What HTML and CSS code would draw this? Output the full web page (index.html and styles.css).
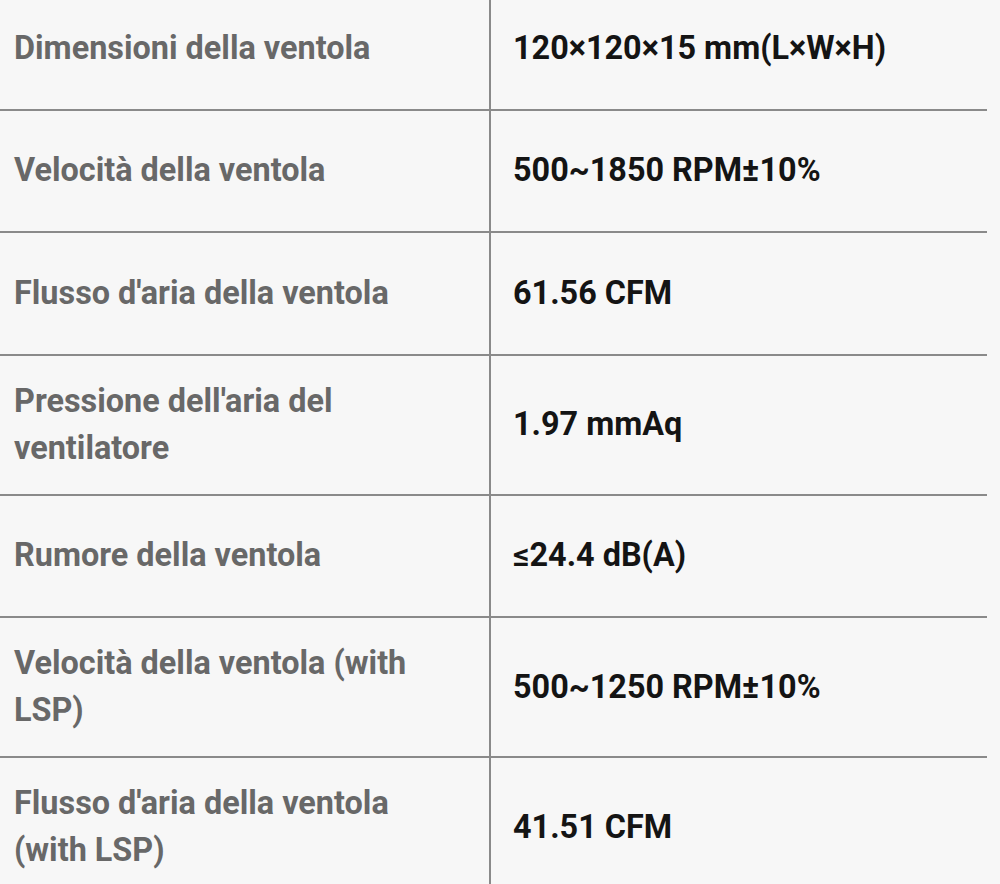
FILE: index.html
```html
<!DOCTYPE html>
<html lang="it">
<head>
<meta charset="utf-8">
<title>Specifiche ventola</title>
<link rel="stylesheet" href="styles.css">
</head>
<body>
<div class="specs">
  <div class="row"><div class="label">Dimensioni della ventola</div><div class="value">120×120×15 mm(L×W×H)</div></div>
  <div class="row"><div class="label">Velocità della ventola</div><div class="value">500~1850 RPM±10%</div></div>
  <div class="row"><div class="label">Flusso d'aria della ventola</div><div class="value">61.56 CFM</div></div>
  <div class="row"><div class="label">Pressione dell'aria del ventilatore</div><div class="value">1.97 mmAq</div></div>
  <div class="row"><div class="label">Rumore della ventola</div><div class="value">≤24.4 dB(A)</div></div>
  <div class="row"><div class="label">Velocità della ventola (with LSP)</div><div class="value">500~1250 RPM±10%</div></div>
  <div class="row last"><div class="label">Flusso d'aria della ventola (with LSP)</div><div class="value">41.51 CFM</div></div>
</div>
</body>
</html>
```
FILE: styles.css
```css
html, body {
  margin: 0;
  padding: 0;
  background: #f7f7f7;
  overflow: hidden;
}
.specs {
  width: 987px;
  margin-top: -12px;
  font-family: Roboto, "Liberation Sans", sans-serif;
  font-weight: 700;
  font-size: 32.4px;
  line-height: 47px;
}
.row {
  display: grid;
  grid-template-columns: 491px 1fr;
  min-height: 122.5px;
  box-sizing: border-box;
  border-bottom: 2px solid #8a8a8a;
}
.row.last {
  border-bottom: none;
}
.label {
  display: flex;
  align-items: center;
  padding: 22px 60px 22px 14px;
  color: #686868;
  border-right: 2px solid #8a8a8a;
}
.value {
  display: flex;
  align-items: center;
  padding: 22px 20px 22px 22px;
  color: #141414;
}
```
